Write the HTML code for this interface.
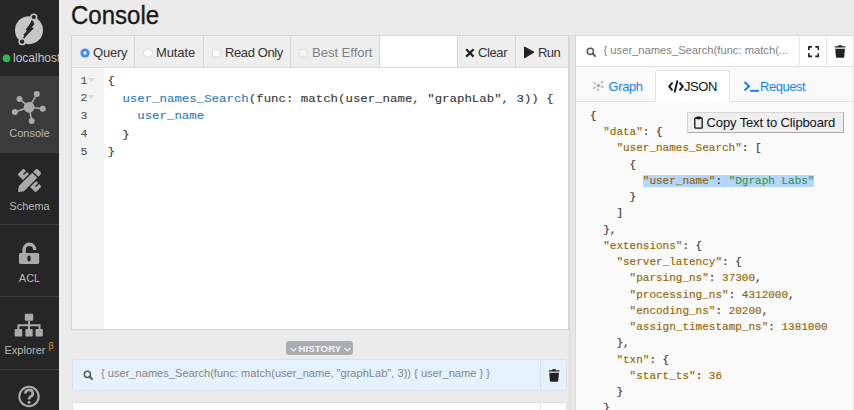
<!DOCTYPE html>
<html><head><meta charset="utf-8">
<style>
*{box-sizing:border-box;margin:0;padding:0}
html,body{width:854px;height:410px;overflow:hidden;background:#ebebeb;font-family:"Liberation Sans",sans-serif;position:relative}
.a{position:absolute}
#side{left:0;top:0;width:59px;height:410px;background:#262626;overflow:hidden}
.sep{position:absolute;left:0;width:59px;height:1px;background:#3d3d3d}
.lbl{position:absolute;left:0;width:59px;text-align:center;font-size:11px;color:#b8b8b8;white-space:nowrap}
#title{left:71px;top:0.5px;font-size:24px;color:#1b1b1b;-webkit-text-stroke:0.35px;transform:scaleY(1.06);transform-origin:0 0}
#ed{left:71px;top:35px;width:498px;height:295px;border:1px solid #d4d4d4;background:#fff}
#tb{left:0;top:0;width:496px;height:32px;background:#fff;border-bottom:1px solid #dcdcdc}
.tbi{position:absolute;top:0;height:31px;background:#eeeeee;border-right:1px solid #d6d6d6;font-size:13px;color:#333;line-height:33px;white-space:nowrap}
#gut{left:0;top:32px;width:32px;height:261px;background:#f3f3f3}
.code{font-family:"Liberation Mono",monospace;font-size:12.4px;white-space:pre;color:#333;-webkit-text-stroke:0.1px}
.ln{position:absolute;left:9px;font-family:"Liberation Mono",monospace;font-size:11.5px;color:#444}
.kw{color:#2b7ab8}
#divbar{left:569px;top:35px;width:7px;height:375px;background:#e6e6e6;border:1px solid #d6d6d6;border-bottom:none;border-radius:2px 2px 0 0}
#right{left:575px;top:35px;width:279px;height:375px;background:#fafafa;border-left:1px solid #d6d6d6;border-top:1px solid #d9d9d9}
#rhead{left:0;top:0;width:278px;height:31px;background:#fff;border-bottom:1px solid #dedede}
.json{font-family:"Liberation Mono",monospace;font-size:11px;white-space:pre;color:#333;line-height:16.24px;-webkit-text-stroke:0.15px}
.k{color:#926500}
.s{color:#3d983f}
.hl{background:#b4d5fe}
#hist{left:72px;top:359px;width:495px;height:32px;background:#e5f1fd;border:1px solid #d5e3f0;border-radius:2px}
</style></head><body>
<div id="side" class="a">
  <svg class="a" style="left:0;top:0" width="59" height="76" viewBox="0 0 59 76">
    <circle cx="29" cy="30.2" r="14" fill="#c6c6c6"/>
    <path d="M33.8 17.1 L22.1 41.7" stroke="#262626" stroke-width="1.3"/>
    <path d="M33 20.3 L34.4 24.3 L31.6 27.4 L34 28 L25.2 37 L22.6 40.2 L24.2 35.6 L23.2 34.8 L27.8 30.4 L25.4 29.9 Z" fill="#262626"/>
    <circle cx="33.8" cy="17.1" r="2.9" fill="#262626" stroke="#c6c6c6" stroke-width="1.5"/>
    <circle cx="22.1" cy="41.7" r="2.9" fill="#262626" stroke="#c6c6c6" stroke-width="1.5"/>
    <circle cx="6.5" cy="58.4" r="3.8" fill="#2fb84a"/>
  </svg>
  <div class="a" style="left:13px;top:51px;font-size:12px;color:#c4c4c4;white-space:nowrap">localhost</div>
  <div class="a" style="left:0;top:76px;width:59px;height:76px;background:#3b3b3b"></div>
  <svg class="a" style="left:0;top:76px" width="59" height="76" viewBox="0 76 59 76">
    <g stroke="#aaaaaa" stroke-width="1.6">
      <line x1="29.1" y1="107.3" x2="36.8" y2="94.1"/>
      <line x1="29.1" y1="107.3" x2="19.5" y2="98.9"/>
      <line x1="29.1" y1="107.3" x2="14.9" y2="112.1"/>
      <line x1="29.1" y1="107.3" x2="42.7" y2="108.7"/>
      <line x1="29.1" y1="107.3" x2="31.7" y2="120.9"/>
    </g>
    <g fill="#aaaaaa">
      <circle cx="29.1" cy="107.3" r="5.4"/>
      <circle cx="36.8" cy="94.1" r="3"/>
      <circle cx="19.5" cy="98.9" r="3"/>
      <circle cx="14.9" cy="112.1" r="3"/>
      <circle cx="42.7" cy="108.7" r="3"/>
      <circle cx="31.7" cy="120.9" r="3"/>
    </g>
  </svg>
  <div class="lbl" style="top:127px">Console</div>
  <div class="sep" style="top:152px"></div>
  <svg class="a" style="left:17.5px;top:168.5px" width="23" height="23" viewBox="0 0 512 512">
    <path fill="#aaaaaa" d="M109.46 244.04l134.58-134.56-44.12-44.12-61.68 61.68a7.919 7.919 0 0 1-11.21 0l-11.21-11.21c-3.1-3.1-3.1-8.12 0-11.21l61.68-61.68-33.64-33.65C131.47-3.1 111.390-3.1 99 9.29L9.29 99c-12.38 12.39-12.39 32.47 0 44.86l100.17 100.18zm388.47-116.8c18.76-18.76 18.75-49.17 0-67.93l-45.25-45.25c-18.760-18.76-49.180-18.76-67.950 0l-46.02 46.01 113.2 113.2 46.02-46.03zM316.08 82.71l-297 296.96L.32 487.11c-2.53 14.49 10.09 27.11 24.59 24.56l107.45-18.84L429.28 195.9 316.08 82.71zm186.63 285.43l-33.64-33.64-61.68 61.68c-3.1 3.1-8.12 3.1-11.21 0l-11.21-11.21c-3.09-3.1-3.09-8.12 0-11.21l61.68-61.68-44.14-44.14L267.93 402.5l100.21 100.2c12.39 12.39 32.47 12.39 44.86 0l89.71-89.7c12.39-12.39 12.39-32.47 0-44.86z"/>
  </svg>
  <div class="lbl" style="top:200px">Schema</div>
  <div class="sep" style="top:224px"></div>
  <svg class="a" style="left:0;top:224px" width="59" height="72" viewBox="0 224 59 72">
    <path d="M24.1 254 V249.6 A5.3 5.3 0 0 1 34.7 249.6 V250" stroke="#aaaaaa" stroke-width="3.4" fill="none"/>
    <rect x="19" y="253" width="20.2" height="11" rx="1.6" fill="#aaaaaa"/>
    <rect x="27.4" y="255.6" width="3.2" height="5.8" rx="1.6" fill="#262626"/>
  </svg>
  <div class="lbl" style="top:272px">ACL</div>
  <div class="sep" style="top:296px"></div>
  <svg class="a" style="left:0;top:296px" width="59" height="73" viewBox="0 296 59 73">
    <g fill="#aaaaaa">
      <rect x="24.8" y="313.7" width="8.4" height="7.1" rx="1"/>
      <rect x="14.7" y="328.9" width="7.5" height="7.6" rx="1"/>
      <rect x="25.4" y="328.9" width="7.3" height="7.6" rx="1"/>
      <rect x="35.5" y="328.9" width="7.3" height="7.6" rx="1"/>
    </g>
    <path d="M29 320.8 V329 M18.4 329 V325.3 H39.5 V329" stroke="#aaaaaa" stroke-width="2" fill="none"/>
  </svg>
  <div class="a" style="left:4.5px;top:344px;font-size:11px;color:#b8b8b8">Explorer</div>
  <div class="a" style="left:48.5px;top:341px;font-size:9px;color:#c9a227">β</div>
  <div class="sep" style="top:369px"></div>
  <svg class="a" style="left:0;top:369px" width="59" height="41" viewBox="0 369 59 41">
    <circle cx="29" cy="396.5" r="9.7" stroke="#aaaaaa" stroke-width="2.1" fill="none"/>
    <path d="M25.4 393.6 A3.7 3.5 0 1 1 30.6 396.6 Q29 397.6 29 399.6" stroke="#aaaaaa" stroke-width="2.6" fill="none"/>
    <circle cx="29" cy="402.2" r="1.5" fill="#aaaaaa"/>
  </svg>
</div>

<div id="title" class="a">Console</div>

<div id="ed" class="a">
  <div id="tb" class="a">
    <div class="tbi" style="left:0;width:63px"><svg class="a" style="left:7.8px;top:12px" width="10" height="10"><circle cx="5" cy="5" r="4.6" fill="#3b8cf5"/><circle cx="5" cy="5" r="1.7" fill="#fff"/></svg><span class="a" style="left:21px;letter-spacing:-0.2px">Query</span></div>
    <div class="tbi" style="left:63px;width:69px"><svg class="a" style="left:7.8px;top:12px" width="10" height="10"><circle cx="5" cy="5" r="4.3" fill="#fff" stroke="#cfcfcf" stroke-width="0.8"/></svg><span class="a" style="left:21px;letter-spacing:-0.1px">Mutate</span></div>
    <div class="tbi" style="left:132px;width:87px"><svg class="a" style="left:8px;top:13px" width="9" height="9"><rect x="0.5" y="0.5" width="7.6" height="7.6" rx="1.2" fill="#fff" stroke="#cfcfcf" stroke-width="0.8"/></svg><span class="a" style="left:21px;letter-spacing:-0.4px">Read Only</span></div>
    <div class="tbi" style="left:219px;width:89px;color:#7a7f85"><svg class="a" style="left:8px;top:13px" width="9" height="9"><rect x="0.5" y="0.5" width="7.6" height="7.6" rx="1.2" fill="#f4f4f4" stroke="#dcdcdc" stroke-width="0.8"/></svg><span class="a" style="left:21px">Best Effort</span></div>
    <div class="tbi" style="left:385px;width:59px;border-left:1px solid #d6d6d6"><svg class="a" style="left:7px;top:12px" width="10" height="10"><path d="M1.2 1.2 L8.6 8.6 M8.6 1.2 L1.2 8.6" stroke="#222" stroke-width="2.2"/></svg><span class="a" style="left:20px;letter-spacing:-0.4px">Clear</span></div>
    <div class="tbi" style="left:444px;width:52px;border-right:none"><svg class="a" style="left:7px;top:10px" width="12" height="13"><path d="M1.5 1 L11 6.2 L1.5 11.8 Z" fill="#222" stroke="#222" stroke-width="1" stroke-linejoin="round"/></svg><span class="a" style="left:22px;letter-spacing:-0.6px">Run</span></div>
  </div>
  <div id="gut" class="a"></div>
  <div class="a" style="left:-0.5px;top:37.5px;width:496px;line-height:17.67px">
    <div class="ln" style="top:-2px">1</div><div class="ln" style="top:15.8px">2</div><div class="ln" style="top:33.6px">3</div><div class="ln" style="top:51.4px">4</div><div class="ln" style="top:69.2px">5</div>
    <svg class="a" style="left:16.5px;top:4px" width="7" height="5"><path d="M0 0 H7 L3.5 4 Z" fill="#d9d9d9"/></svg>
    <svg class="a" style="left:16.5px;top:21.7px" width="7" height="5"><path d="M0 0 H7 L3.5 4 Z" fill="#d9d9d9"/></svg>
    <div class="a code" style="left:36px;top:-0.8px;line-height:20.6px;transform:scaleY(0.86);transform-origin:0 0">{
  <span class="kw">user_names_Search</span>(func: match(user_name, "graphLab", 3)) {
    <span class="kw">user_name</span>
  }
}</div>
  </div>
</div>

<div id="divbar" class="a"></div>

<div id="right" class="a">
  <div id="rhead" class="a">
    <svg class="a" style="left:10px;top:10.5px" width="11" height="11" viewBox="0 0 11 11"><circle cx="4.4" cy="4.4" r="3.1" stroke="#555" stroke-width="1.45" fill="none"/><path d="M6.7 6.7 L9 9" stroke="#555" stroke-width="1.9" stroke-linecap="round"/></svg>
    <div class="a" style="left:27.5px;top:8px;font-size:11.2px;color:#7f7f7f;white-space:nowrap">{ user_names_Search(func: match(...</div>
    <div class="a" style="left:222.5px;top:0;width:1px;height:31px;background:#e6e6e6"></div>
    <svg class="a" style="left:231.8px;top:10px" width="11.5" height="11.5" viewBox="0 0 11.5 11.5"><path d="M0.9 4 V0.9 H4 M7.3 0.9 H10.4 V4 M10.4 7.2 V10.3 H7.3 M4 10.3 H0.9 V7.2" stroke="#222" stroke-width="1.7" fill="none"/></svg>
    <div class="a" style="left:249.5px;top:0;width:1px;height:31px;background:#e6e6e6"></div>
    <svg class="a" style="left:258px;top:9px" width="12" height="14" viewBox="0 0 12 14"><path d="M0.8 1.2 H11.4 V2.6 H0.8 Z M4.2 0.2 H8 V1.4 H4.2 Z" fill="#222"/><path d="M1.2 3.7 H11 L10.2 12 Q10.1 12.8 9.3 12.8 H2.9 Q2.1 12.8 2 12 Z" fill="#222"/></svg>
  </div>
  <div class="a" style="left:0;top:65px;width:278px;height:1px;background:#e2e2e2"></div>
  <div class="a" style="left:79px;top:34px;width:75px;height:32px;background:#fff;border:1px solid #e3e3e3;border-bottom:none;border-radius:3px 3px 0 0"></div>
  <svg class="a" style="left:17px;top:44px" width="11" height="11" viewBox="0 0 11 11"><g fill="#a5a5a5"><circle cx="5.5" cy="5.5" r="1.6"/><circle cx="1.5" cy="3" r="1"/><circle cx="9" cy="2" r="1"/><circle cx="9.5" cy="7" r="1"/><circle cx="5" cy="10" r="1"/><circle cx="1.2" cy="8" r="1"/></g><g stroke="#b0b0b0" stroke-width="0.6"><path d="M5.5 5.5 L1.5 3 M5.5 5.5 L9 2 M5.5 5.5 L9.5 7 M5.5 5.5 L5 10 M5.5 5.5 L1.2 8"/></g></svg>
  <div class="a" style="left:32.5px;top:43px;font-size:13px;color:#1a7ef0;letter-spacing:-0.4px">Graph</div>
  <svg class="a" style="left:92px;top:43.5px" width="16" height="13" viewBox="0 0 16 13"><path d="M4.5 2.5 L1.3 6.5 L4.5 10.5 M11.5 2.5 L14.7 6.5 L11.5 10.5" stroke="#111" stroke-width="2" fill="none"/><path d="M9.5 0.5 L6.5 12.5" stroke="#111" stroke-width="1.8"/></svg>
  <div class="a" style="left:108px;top:43px;font-size:13px;color:#111;letter-spacing:-0.4px">JSON</div>
  <svg class="a" style="left:166.5px;top:45px" width="17" height="12" viewBox="0 0 17 12"><path d="M1.5 1 L6 5.2 L1.5 9.4" stroke="#1a7ef0" stroke-width="2" fill="none"/><path d="M7.2 9.8 H16" stroke="#1a7ef0" stroke-width="2"/></svg>
  <div class="a" style="left:184px;top:43.3px;font-size:13px;color:#1a7ef0;letter-spacing:-0.45px">Request</div>

  <div class="a json" style="left:14px;top:72px">{
  <span class="k">"data"</span>: {
    <span class="k">"user_names_Search"</span>: [
      {
        <span class="hl"><span class="k">"user_name"</span>: <span class="s">"Dgraph Labs"</span></span>
      }
    ]
  },
  <span class="k">"extensions"</span>: {
    <span class="k">"server_latency"</span>: {
      <span class="k">"parsing_ns"</span>: <span class="k">37300</span>,
      <span class="k">"processing_ns"</span>: <span class="k">4312000</span>,
      <span class="k">"encoding_ns"</span>: <span class="k">20200</span>,
      <span class="k">"assign_timestamp_ns"</span>: <span class="k">1381000</span>
    },
    <span class="k">"txn"</span>: {
      <span class="k">"start_ts"</span>: <span class="k">36</span>
    }
  }
}</div>
  <div class="a" style="left:110.5px;top:76px;width:157px;height:21px;background:#efefef;border:1px solid #a9a9a9;border-top-color:#d5d5d5;border-left-color:#d5d5d5;font-size:13px;color:#111;white-space:nowrap">
    <svg class="a" style="left:6px;top:3px" width="9" height="13" viewBox="0 0 9 13"><rect x="0.8" y="2" width="7.4" height="10.2" rx="0.8" stroke="#111" stroke-width="1.3" fill="none"/><rect x="2.5" y="0.6" width="4" height="2.6" rx="0.5" fill="#111"/></svg>
    <span class="a" style="left:19px;top:2px;letter-spacing:-0.12px">Copy Text to Clipboard</span>
  </div>
</div>

<div class="a" style="left:286px;top:341px;width:67px;height:14px;background:#a9acb0;border-radius:3px;color:#f4f4f4;font-size:10px;font-weight:bold;line-height:14px;white-space:nowrap">
  <svg class="a" style="left:4px;top:5.5px" width="7" height="5"><path d="M0.5 0.8 L3.5 3.8 L6.5 0.8" stroke="#f4f4f4" stroke-width="1.2" fill="none"/></svg>
  <span class="a" style="left:12.5px;top:0.5px;font-size:9.6px;letter-spacing:0.1px">HISTORY</span>
  <svg class="a" style="left:57.5px;top:5.5px" width="7" height="5"><path d="M0.5 0.8 L3.5 3.8 L6.5 0.8" stroke="#f4f4f4" stroke-width="1.2" fill="none"/></svg>
</div>

<div id="hist" class="a">
  <svg class="a" style="left:10px;top:9.5px" width="11" height="11" viewBox="0 0 11 11"><circle cx="4.4" cy="4.4" r="3.1" stroke="#555" stroke-width="1.45" fill="none"/><path d="M6.7 6.7 L9 9" stroke="#555" stroke-width="1.9" stroke-linecap="round"/></svg>
  <div class="a" style="left:28px;top:6.7px;font-size:11.1px;color:#858585;white-space:nowrap">{ user_names_Search(func: match(user_name, "graphLab", 3)) { user_name } }</div>
  <div class="a" style="left:467px;top:0;width:1px;height:30px;background:#d3e0ec"></div>
  <svg class="a" style="left:475px;top:8.5px" width="12" height="14" viewBox="0 0 12 14"><path d="M0.8 1.2 H11.4 V2.6 H0.8 Z M4.2 0.2 H8 V1.4 H4.2 Z" fill="#222"/><path d="M1.2 3.7 H11 L10.2 12 Q10.1 12.8 9.3 12.8 H2.9 Q2.1 12.8 2 12 Z" fill="#222"/></svg>
</div>
<div class="a" style="left:72px;top:402px;width:495px;height:20px;background:#fff;border:1px solid #e0e0e0"></div>
<div class="a" style="left:540px;top:403px;width:1px;height:10px;background:#e6e6e6"></div>
<div class="a" style="left:853px;top:36px;width:1px;height:374px;background:#e6e6e6"></div>
</body></html>
